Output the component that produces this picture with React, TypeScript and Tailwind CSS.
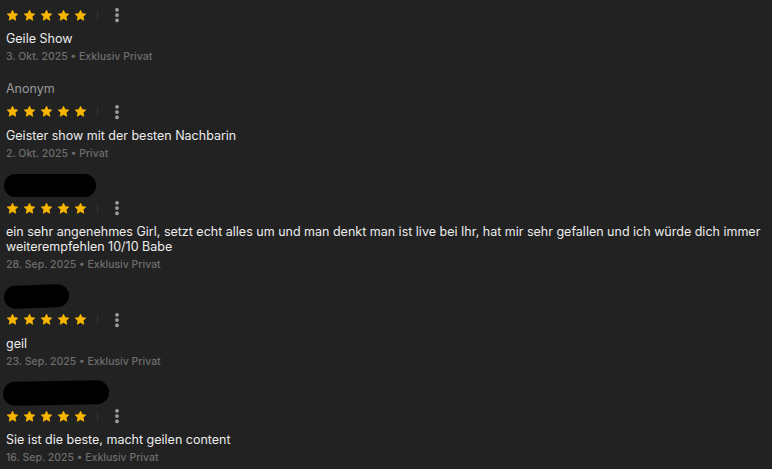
import { EllipsisVertical } from 'lucide-react';

type Review = {
  name?: string;
  blob?: { w: number; h: number; ml: number; rot: number };
  text: string;
  date: string;
  kind: string;
};

const reviews: Review[] = [
  { text: 'Geile Show', date: '3. Okt. 2025', kind: 'Exklusiv Privat' },
  { name: 'Anonym', text: 'Geister show mit der besten Nachbarin', date: '2. Okt. 2025', kind: 'Privat' },
  {
    blob: { w: 92, h: 23, ml: -2, rot: 0 },
    text: 'ein sehr angenehmes Girl, setzt echt alles um und man denkt man ist live bei Ihr, hat mir sehr gefallen und ich würde dich immer weiterempfehlen 10/10 Babe',
    date: '28. Sep. 2025',
    kind: 'Exklusiv Privat',
  },
  { blob: { w: 65, h: 23, ml: -2, rot: -2 }, text: 'geil', date: '23. Sep. 2025', kind: 'Exklusiv Privat' },
  {
    blob: { w: 106, h: 24, ml: -3, rot: -1 },
    text: 'Sie ist die beste, macht geilen content',
    date: '16. Sep. 2025',
    kind: 'Exklusiv Privat',
  },
];

function StarIcon() {
  return (
    <svg viewBox="0 0 24 24" className="w-[13px] h-[13px] text-[#f7b500]" fill="currentColor">
      <path
        d="M12 2.2l2.95 6.3 6.85.8-5.08 4.7 1.36 6.8L12 17.4l-6.08 3.4 1.36-6.8L2.2 9.3l6.85-.8z"
        stroke="currentColor"
        strokeWidth="1.4"
        strokeLinejoin="round"
      />
    </svg>
  );
}

function Stars() {
  return (
    <div className="flex items-center h-5">
      <div className="flex items-center gap-[4px]">
        {[0, 1, 2, 3, 4].map((i) => (
          <StarIcon key={i} />
        ))}
      </div>
      <span className="ml-[10px] w-px h-[7px] bg-[#3a3a3a]" />
      <button className="ml-[10px] text-[#a8a8a8]">
        <EllipsisVertical className="w-[18px] h-[18px]" strokeWidth={3} />
      </button>
    </div>
  );
}

function ReviewItem({ r, first }: { r: Review; first?: boolean }) {
  return (
    <div className={first ? 'pt-[5px]' : 'pt-[13.5px]'}>
      {r.name && <div className="h-5 leading-5 text-[12.5px] text-[#9a9a9a] mb-[3px]">{r.name}</div>}
      {r.blob && (
        <div className="h-5 mb-[3px] flex items-center">
          <span
            className="block bg-black rounded-full"
            style={{ width: r.blob.w, height: r.blob.h, marginLeft: r.blob.ml, transform: `rotate(${r.blob.rot}deg)` }}
          />
        </div>
      )}
      <Stars />
      <p className="mt-[6px] text-[12.5px] leading-[15px] text-[#ececec]">{r.text}</p>
      <div className="mt-[3px] h-4 leading-4 text-[10.5px] font-medium text-[#6e6e6e]">
        {r.date} • {r.kind}
      </div>
    </div>
  );
}

export default function App() {
  return (
    <div
      className="w-[772px] h-[469px] overflow-hidden bg-[#222222] px-[6px]"
      style={{ fontFamily: 'Inter, "Noto Sans", sans-serif' }}
    >
      {reviews.map((r, i) => (
        <ReviewItem key={i} r={r} first={i === 0} />
      ))}
    </div>
  );
}
